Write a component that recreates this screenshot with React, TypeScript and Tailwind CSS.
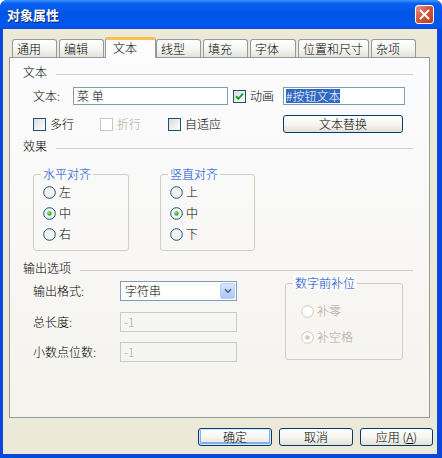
// 对象属性 dialog — XP Luna style
import React from "react"

// ─── tabs ────────────────────────────────────────────────────────────────
const TABS: { label: string; cls: string; active?: boolean }[] = [
  { label: "通用",       cls: "w-[45px]" },
  { label: "编辑",       cls: "w-[45px] ml-[2px]" },
  { label: "文本",       cls: "w-[51px] ml-[1px]", active: true },
  { label: "线型",       cls: "w-[45px]" },
  { label: "填充",       cls: "w-[45px] ml-[2px]" },
  { label: "字体",       cls: "w-[46px] ml-[2px]" },
  { label: "位置和尺寸", cls: "w-[71px] ml-[2px]" },
  { label: "杂项",       cls: "w-[45px] ml-[2px]" },
]

function Check({ checked = false, disabled = false }: { checked?: boolean; disabled?: boolean }) {
  return (
    <span
      className={`w-[13px] h-[13px] shrink-0 border flex items-center justify-center ${
        disabled
          ? "border-[#CAC8BB] bg-white"
          : "border-[#1C5180] bg-[linear-gradient(135deg,#DCDCD7,#FFFFFF)]"
      }`}
    >
      {checked && (
        <svg width="9" height="9" viewBox="0 0 9 9">
          <path d="M1 4.2 L3.4 6.8 L8 1.6" stroke="#21A121" strokeWidth="2" fill="none" />
        </svg>
      )}
    </span>
  )
}

function Radio({ checked = false, disabled = false }: { checked?: boolean; disabled?: boolean }) {
  return (
    <svg width="13" height="13" viewBox="0 0 13 13" className="shrink-0">
      <circle
        cx="6.5" cy="6.5" r="5.8"
        fill={disabled ? "#FFFFFF" : "#F3F3EE"}
        stroke={disabled ? "#CAC8BB" : "#1C5180"}
        strokeWidth="1"
      />
      {checked && <circle cx="6.5" cy="6.5" r="2.2" fill={disabled ? "#CAC8BB" : "#2DB62D"} />}
      {checked && !disabled && <circle cx="6" cy="6" r="0.9" fill="#A8E8A8" />}
    </svg>
  )
}

function RadioItem({ label, checked, disabled }: { label: string; checked?: boolean; disabled?: boolean }) {
  return (
    <div className={`flex items-center gap-[3px] h-[14px] ${disabled ? "text-[#ACA899]" : ""}`}>
      <Radio checked={checked} disabled={disabled} />
      <span className="leading-[14px]">{label}</span>
    </div>
  )
}

function Section({ title, className = "" }: { title: string; className?: string }) {
  return (
    <div className={`flex items-center h-[16px] ${className}`}>
      <span className="leading-[16px]">{title}</span>
      <div className="flex-1 h-px bg-[#D0D0BF] ml-[9px] mt-[4px]" />
    </div>
  )
}

function GroupBox({ title, className = "", children }: { title: string; className?: string; children: React.ReactNode }) {
  return (
    <div className={`relative shrink-0 border border-[#D0D0BF] rounded-[3px] ${className}`}>
      <span className="absolute left-[7px] top-[-9px] px-[2px] bg-[#FAFAF8] text-[#0046D5] leading-[16px]">
        {title}
      </span>
      {children}
    </div>
  )
}

function XPButton({ children, className = "", isDefault = false }: { children: React.ReactNode; className?: string; isDefault?: boolean }) {
  return (
    <div
      className={`h-[18px] border border-[#003C74] rounded-[3px] flex items-center justify-center leading-[16px] bg-[linear-gradient(to_bottom,#FFFFFF,#F5F4EE_55%,#E3E0D6)] ${
        isDefault ? "shadow-[inset_0_0_0_1px_#CEE7FF,inset_0_-1px_0_2px_#89ADE4]" : ""
      } ${className}`}
    >
      {children}
    </div>
  )
}

export default function App() {
  return (
    <div className="w-[442px] h-[458px] flex flex-col rounded-t-[7px] bg-[#0A48DB] overflow-hidden font-['Noto_Sans_CJK_SC',sans-serif] font-light text-[12px] text-black">
      {/* ── title bar ─────────────────────────────────────────────────── */}
      <div className="h-[29px] shrink-0 flex items-center pl-[7px] pr-[8px] bg-[linear-gradient(to_bottom,#3D95FF_0%,#0A61F1_12%,#0055E5_45%,#0058EE_85%,#0A4DD8_100%)]">
        <span className="flex-1 text-white font-bold text-[13px] leading-[16px] [text-shadow:1px_1px_0_#0A1E6E]">
          对象属性
        </span>
        <div className="w-[19px] h-[19px] rounded-[3px] border border-white bg-[linear-gradient(135deg,#E99A84,#D4573B_45%,#C1381E)] flex items-center justify-center">
          <svg width="11" height="11" viewBox="0 0 11 11">
            <path d="M1.5 1.5 L9.5 9.5 M9.5 1.5 L1.5 9.5" stroke="#FFFFFF" strokeWidth="2" strokeLinecap="round" />
          </svg>
        </div>
      </div>

      {/* ── body ──────────────────────────────────────────────────────── */}
      <div className="flex-1 ml-[3px] mr-[5px] mb-[4px] bg-[#ECE9D8] flex flex-col">
        {/* tabs */}
        <div className="flex items-end h-[20px] mt-[8px] pl-[9px]">
          {TABS.map((t) =>
            t.active ? (
              <div
                key={t.label}
                className={`${t.cls} relative z-10 h-[21px] mb-[-1px] border-x border-[#919B9C] border-t-[3px] border-t-[#FBC04B] rounded-t-[3px] bg-[#FCFCFE] pl-[7px] text-[12px] leading-[16px]`}
              >
                {t.label}
              </div>
            ) : (
              <div
                key={t.label}
                className={`${t.cls} h-[18px] border border-b-0 border-[#919B9C] rounded-t-[3px] bg-[linear-gradient(to_bottom,#FFFFFF,#F3F3EF_60%,#E4E3DB)] pl-[4px] pt-[1px] leading-[16px]`}
              >
                {t.label}
              </div>
            )
          )}
        </div>

        {/* panel */}
        <div className="ml-[6px] w-[421px] h-[361px] border border-[#919B9C] bg-[linear-gradient(to_bottom,#FCFCFE,#F4F3EE)] flex flex-col pl-[13px] pr-[16px]">
          <Section title="文本" className="mt-[6px]" />

          <div className="flex items-center h-[18px] mt-[7px] pl-[10px]">
            <span className="w-[40px] leading-[16px]">文本:</span>
            <div className="w-[155px] h-[18px] border border-[#7F9DB9] bg-white flex items-center pl-[3px] leading-[16px]">
              菜 单
            </div>
            <div className="w-[50px] ml-[5px] flex items-center gap-[4px]">
              <Check checked />
              <span className="leading-[16px]">动画</span>
            </div>
            <div className="w-[122px] h-[18px] border border-[#7F9DB9] bg-white flex items-center pl-[2px]">
              <span className="bg-[#316AC5] text-white leading-[14px]">#按钮文本</span>
            </div>
          </div>

          <div className="flex items-center h-[18px] mt-[10px] pl-[10px]">
            <div className="w-[67px] flex items-center gap-[4px]">
              <Check />
              <span className="leading-[16px]">多行</span>
            </div>
            <div className="w-[68px] flex items-center gap-[4px] text-[#ACA899]">
              <Check disabled />
              <span className="leading-[16px]">折行</span>
            </div>
            <div className="w-[115px] flex items-center gap-[4px]">
              <Check />
              <span className="leading-[16px]">自适应</span>
            </div>
            <XPButton className="w-[120px]">文本替换</XPButton>
          </div>

          <Section title="效果" className="mt-[5px]" />

          <div className="flex mt-[20px] pl-[10px]">
            <GroupBox title="水平对齐" className="w-[96px] h-[77px]">
              <div className="flex flex-col pl-[9px] pt-[10px] gap-[7px]">
                <RadioItem label="左" />
                <RadioItem label="中" checked />
                <RadioItem label="右" />
              </div>
            </GroupBox>
            <GroupBox title="竖直对齐" className="ml-[31px] w-[95px] h-[77px]">
              <div className="flex flex-col pl-[9px] pt-[10px] gap-[7px]">
                <RadioItem label="上" />
                <RadioItem label="中" checked />
                <RadioItem label="下" />
              </div>
            </GroupBox>
          </div>

          <Section title="输出选项" className="mt-[9px]" />

          <div className="flex mt-[5px] pl-[10px]">
            <div className="w-[204px] flex flex-col">
              <div className="flex items-center h-[20px]">
                <span className="w-[87px] leading-[16px]">输出格式:</span>
                <div className="w-[117px] h-[20px] border border-[#7F9DB9] bg-white flex items-center">
                  <span className="flex-1 pl-[4px] leading-[16px]">字符串</span>
                  <span className="w-[15px] h-[16px] mr-[1px] rounded-[2px] border border-[#B9CCF3] bg-[linear-gradient(to_bottom,#DCE7FD,#C1D3FB_50%,#AFC6F7)] flex items-center justify-center">
                    <svg width="8" height="6" viewBox="0 0 8 6">
                      <path d="M1 1.2 L4 4.2 L7 1.2" stroke="#4D6185" strokeWidth="1.6" fill="none" />
                    </svg>
                  </span>
                </div>
              </div>
              <div className="flex items-center h-[20px] mt-[11px]">
                <span className="w-[87px] leading-[16px]">总长度:</span>
                <div className="w-[117px] h-[20px] border border-[#C3CCD6] flex items-center pl-[3px] text-[#ACA899] leading-[16px]">
                  -1
                </div>
              </div>
              <div className="flex items-center h-[20px] mt-[10px]">
                <span className="w-[87px] leading-[16px]">小数点位数:</span>
                <div className="w-[117px] h-[20px] border border-[#C3CCD6] flex items-center pl-[3px] text-[#ACA899] leading-[16px]">
                  -1
                </div>
              </div>
            </div>
            <GroupBox title="数字前补位" className="ml-[48px] mt-[2px] w-[118px] h-[77px]">
              <div className="flex flex-col pl-[15px] pt-[20px] gap-[12px]">
                <RadioItem label="补零" disabled />
                <RadioItem label="补空格" checked disabled />
              </div>
            </GroupBox>
          </div>
        </div>

        {/* buttons */}
        <div className="flex justify-end gap-[7px] pr-[4px] mt-[10px]">
          <XPButton className="w-[74px]" isDefault>确定</XPButton>
          <XPButton className="w-[74px]">取消</XPButton>
          <XPButton className="w-[73px]">
            应用 (<span className="underline">A</span>)
          </XPButton>
        </div>
      </div>
    </div>
  )
}
